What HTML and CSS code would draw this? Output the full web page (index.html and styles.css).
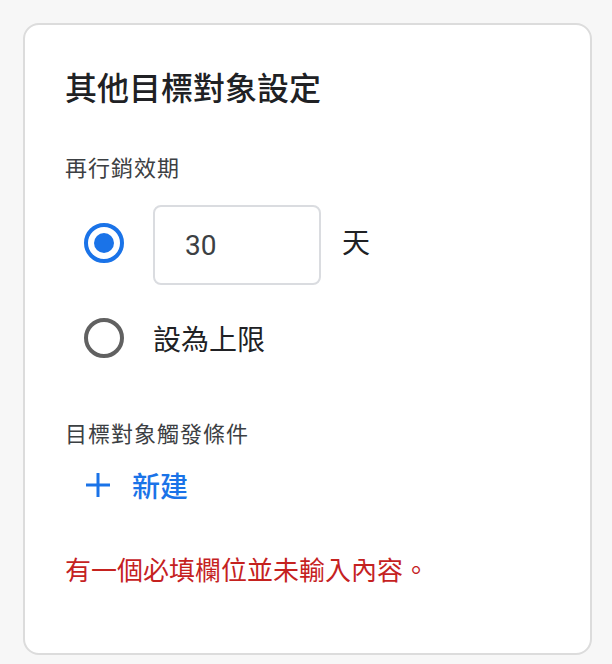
FILE: index.html
```html
<!DOCTYPE html>
<html lang="zh-Hant">
<head>
<meta charset="utf-8">
<title>其他目標對象設定</title>
<link rel="stylesheet" href="styles.css">
</head>
<body>
<div class="card">
  <h1 class="title">其他目標對象設定</h1>
  <div class="label label-duration">再行銷效期</div>
  <div class="options">
    <div class="option">
      <span class="radio checked"><span class="dot"></span></span>
      <div class="input">30</div>
      <span class="unit">天</span>
    </div>
    <div class="option option-max">
      <span class="radio"></span>
      <span class="option-text">設為上限</span>
    </div>
  </div>
  <div class="label label-trigger">目標對象觸發條件</div>
  <div class="new-btn">
    <svg class="plus" width="24" height="24" viewBox="0 0 24 24"><path d="M12 0V24M0 12H24" stroke="#1a73e8" stroke-width="3" fill="none"/></svg>
    <span class="new-text">新建</span>
  </div>
  <div class="error">有一個必填欄位並未輸入內容。</div>
</div>
</body>
</html>
```
FILE: styles.css
```css
html, body {
  margin: 0;
  padding: 0;
}
body {
  background: #f7f7f7;
  padding: 23px 0 0 23px;
  font-family: "Noto Sans CJK TC", "Noto Sans", sans-serif;
  color: #202124;
}
.card {
  box-sizing: border-box;
  width: 569px;
  height: 632px;
  background: #ffffff;
  border: 2px solid #dcdcdc;
  border-radius: 16px;
  padding: 41px 40px 0 40px;
  display: flex;
  flex-direction: column;
}
.title {
  margin: 0;
  font-size: 32px;
  line-height: 40px;
  font-weight: 500;
  color: #202124;
}
.label {
  font-size: 22px;
  line-height: 30px;
  letter-spacing: 1px;
  color: #3c4043;
}
.label-duration {
  margin-top: 45px;
}
.options {
  margin-top: 24px;
  display: flex;
  flex-direction: column;
  gap: 29px;
}
.option {
  display: flex;
  align-items: center;
  margin-left: 19px;
}
.option-max {
  height: 48px;
}
.radio {
  box-sizing: border-box;
  width: 40px;
  height: 40px;
  border-radius: 50%;
  border: 4px solid #616161;
  display: flex;
  align-items: center;
  justify-content: center;
  flex: none;
  margin-bottom: 5px;
}
.option-max .radio {
  margin-bottom: 0;
}
.radio.checked {
  border-color: #1a73e8;
}
.dot {
  width: 20px;
  height: 20px;
  border-radius: 50%;
  background: #1a73e8;
}
.input {
  box-sizing: border-box;
  margin-left: 29px;
  width: 168px;
  height: 80px;
  border: 2px solid #dadce0;
  border-radius: 8px;
  padding-left: 30px;
  display: flex;
  align-items: center;
  font-family: Roboto, "Noto Sans", sans-serif;
  font-size: 28px;
  color: #3c4043;
}
.unit {
  margin-left: 21px;
  margin-bottom: 8px;
  font-size: 28px;
  line-height: 36px;
  color: #202124;
}
.option-text {
  margin-left: 29px;
  font-size: 28px;
  line-height: 36px;
  color: #202124;
}
.label-trigger {
  margin-top: 55px;
}
.new-btn {
  margin-top: 20px;
  margin-left: 21px;
  display: flex;
  align-items: center;
  height: 36px;
}
.plus {
  display: block;
  flex: none;
}
.new-text {
  margin-left: 22px;
  font-size: 28px;
  line-height: 36px;
  font-weight: 500;
  color: #1a73e8;
}
.error {
  margin-top: 49px;
  font-size: 26px;
  line-height: 34px;
  color: #c5221f;
}
```
